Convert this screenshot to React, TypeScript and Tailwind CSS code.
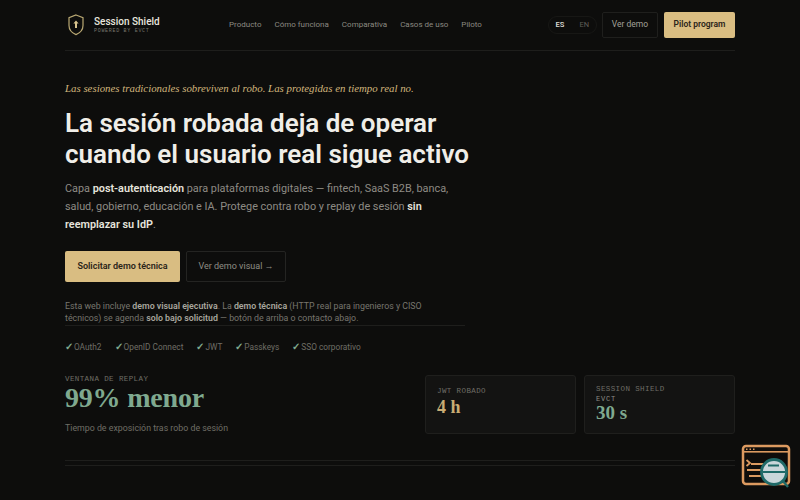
import React from 'react';

const navLinks = ['Producto', 'Cómo funciona', 'Comparativa', 'Casos de uso', 'Piloto'];
const protocols = ['OAuth2', 'OpenID Connect', 'JWT', 'Passkeys', 'SSO corporativo'];

const sans = 'font-["Roboto",sans-serif]';
const mono = 'font-["Liberation_Mono",monospace]';
const serif = 'font-["Liberation_Serif",serif]';

const ShieldLogo = () => (
  <svg width="18" height="22" viewBox="0 0 18 22" fill="none">
    <path d="M9 1 L16 3.6 V11.5 C16 15.8 13 18.9 9 20.6 C5 18.9 2 15.8 2 11.5 V3.6 Z" stroke="#b9a873" strokeWidth="1.2" />
    <path d="M9 6.5 L11.6 9.6 H10 V14 H8 V9.6 H6.4 Z" fill="#d8c48e" />
  </svg>
);

const FloatingBadge = () => (
  <svg width="52" height="46" viewBox="0 0 52 46" fill="none">
    <rect x="3" y="2" width="46" height="38" rx="3" fill="#0f0d0b" stroke="#dc9a60" strokeWidth="2.5" />
    <rect x="3" y="7" width="46" height="1.6" fill="#dc9a60" />
    <rect x="6" y="4.5" width="1.5" height="1.5" fill="#dc9a60" />
    <rect x="9.5" y="4.5" width="1.5" height="1.5" fill="#dc9a60" />
    <rect x="13" y="4.5" width="1.5" height="1.5" fill="#dc9a60" />
    <path d="M6.5 16 L10 19 L6.5 22" stroke="#dc9a60" strokeWidth="1.8" />
    <path d="M11 20 H26 M7 26 H24 M9 32 H24" stroke="#dc9a60" strokeWidth="1.8" />
    <circle cx="34" cy="28" r="12.5" fill="#c9d6da" stroke="#1f6a68" strokeWidth="2.8" />
    <path d="M23 28 H45 M28 21.5 H39" stroke="#1f6a68" strokeWidth="2" />
    <path d="M43 37 L48 43" stroke="#1f6a68" strokeWidth="2.4" />
  </svg>
);

export default function App() {
  return (
    <div className={`relative h-[500px] w-[800px] overflow-hidden bg-[#0d0d0c] px-[65px] ${sans}`}>
      {/* Header */}
      <header className="flex h-[51px] items-center border-b border-[#1e1e1c] pb-[1px]">
        <div className="flex w-[164px] items-center gap-[8px] pl-[2px]">
          <ShieldLogo />
          <div className="ml-[1px] flex translate-y-[1px] flex-col">
            <span className="text-[10px] leading-[12px] font-medium text-[#e8e6df]">Session Shield</span>
            <span className={`text-[5px] leading-[7px] tracking-[0.7px] text-[#77756d] ${mono}`}>POWERED BY EVCT</span>
          </div>
        </div>
        <nav className="mt-[1px] flex gap-[13px] text-[8px] text-[#8b8981]">
          {navLinks.map((link) => (
            <span key={link}>{link}</span>
          ))}
        </nav>
        <div className="ml-auto flex items-center gap-[5px]">
          <div className="flex h-[18px] items-center gap-[15px] rounded-full border border-[#171715] px-[7px] text-[7.5px]">
            <span className="font-semibold text-[#d8d6cf]">ES</span>
            <span className="text-[#5f5e58]">EN</span>
          </div>
          <button className="h-[26px] w-[56px] rounded-[2px] border border-[#1f1f1d] text-[8.5px] text-[#a3a199]">Ver demo</button>
          <button className="ml-[1px] h-[26px] w-[71px] rounded-[2px] bg-[#d9bd82] text-[8.5px] font-semibold text-[#2a2419]">Pilot program</button>
        </div>
      </header>

      {/* Hero */}
      <main className="pt-[30px]">
        <p className={`text-[10.85px] leading-[14px] text-[#d2b67d] italic ${serif}`}>
          Las sesiones tradicionales sobreviven al robo. Las protegidas en tiempo real no.
        </p>
        <h1 className="mt-[13px] text-[26px] leading-[31px] font-semibold text-[#f0eee8]">
          La sesión robada deja de operar
          <br />
          cuando el usuario real sigue activo
        </h1>
        <p className="mt-[10px] w-[395px] text-[10.85px] leading-[18px] text-[#8d8b84]">
          Capa <b className="font-semibold text-[#e6e4dd]">post-autenticación</b> para plataformas digitales — fintech, SaaS B2B, banca, salud, gobierno, educación e IA. Protege contra robo y replay de sesión{' '}
          <b className="font-semibold text-[#e6e4dd]">sin reemplazar su IdP</b>.
        </p>

        <div className="mt-[17px] flex gap-[6px]">
          <button className="h-[31px] w-[115px] rounded-[2px] bg-[#d9bd82] text-[9px] font-semibold text-[#2a2419]">Solicitar demo técnica</button>
          <button className="h-[31px] w-[100px] rounded-[2px] border border-[#242422] text-[9px] text-[#8f8d85]">Ver demo visual →</button>
        </div>

        <div className="mt-[18px] w-[400px] border-b border-[#1e1e1c] pb-[1px]">
          <p className="w-[365px] text-[8.8px] leading-[12px] text-[#77756e]">
            Esta web incluye <b className="font-semibold text-[#a8a69e]">demo visual ejecutiva</b>. La <b className="font-semibold text-[#a8a69e]">demo técnica</b> (HTTP real para ingenieros y CISO técnicos) se agenda <b className="font-semibold text-[#a8a69e]">solo bajo solicitud</b> — botón de arriba o contacto abajo.
          </p>
        </div>

        <ul className="mt-[15px] flex gap-[13px] text-[8.3px] leading-[12px] text-[#6f6d66]">
          {protocols.map((item) => (
            <li key={item} className="flex">
              <span className="w-[9px] shrink-0 text-[10px] font-bold text-[#7fa98f]">✓</span>
              {item}
            </li>
          ))}
        </ul>

        {/* Stats */}
        <div className="mt-[22px] flex items-start">
          <div className="w-[360px]">
            <div className={`text-[7.5px] leading-[8px] tracking-[0.4px] text-[#6f6d66] ${mono}`}>VENTANA DE REPLAY</div>
            <div className={`text-[28px] leading-[30px] font-bold tracking-[-0.2px] text-[#7fa98f] ${serif}`}>99% menor</div>
            <div className="mt-[9px] text-[8.8px] leading-[12px] text-[#6f6d66]">Tiempo de exposición tras robo de sesión</div>
          </div>
          <div className="flex gap-[8px]">
            <div className="h-[59px] w-[151px] rounded-[3px] border border-[#1f1f1d] bg-[#131312] px-[11px] pt-[11px]">
              <div className={`text-[7.5px] leading-[8px] tracking-[0.4px] text-[#6f6d66] ${mono}`}>JWT ROBADO</div>
              <div className={`mt-[1px] text-[18px] leading-[22px] font-bold text-[#c9ad74] ${serif}`}>4 h</div>
            </div>
            <div className="h-[59px] w-[151px] rounded-[3px] border border-[#1f1f1d] bg-[#131312] px-[11px] pt-[9px]">
              <div className={`text-[7.5px] leading-[8px] tracking-[0.4px] text-[#6f6d66] ${mono}`}>SESSION SHIELD</div>
              <div className={`mt-[2px] text-[7px] leading-[8px] tracking-[0.8px] text-[#8d8b84] ${mono}`}>EVCT</div>
              <div className={`text-[19px] leading-[19px] font-bold text-[#7fa98f] ${serif}`}>30 s</div>
            </div>
          </div>
        </div>

        <div className="mt-[26px] h-[6px] border-y border-[#1e1e1c]" />
      </main>

      {/* Floating widget */}
      <div className="absolute top-[444px] left-[740px]">
        <FloatingBadge />
      </div>
    </div>
  );
}
